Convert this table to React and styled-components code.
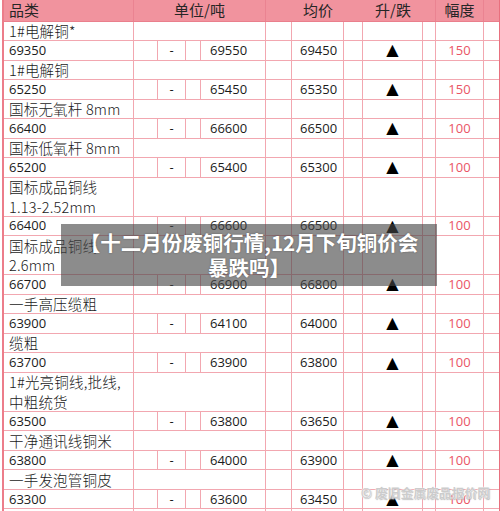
import React from "react";
import styled, { createGlobalStyle } from "styled-components";

const GlobalStyle = createGlobalStyle`
  html, body {
    margin: 0;
    padding: 0;
    background: #ffffff;
  }
  body {
    font-family: "Open Sans", "Noto Sans CJK SC", sans-serif;
  }
`;

const COLS = "130px 24px 28px 15px 65px 26px 52px 19px 60px 13px 48px 13px";
const LINE = "#f2a7b0";

const Page = styled.div`
  position: relative;
  width: 500px;
  height: 511px;
  overflow: hidden;
`;

const Sheet = styled.div`
  margin-left: 2px;
  width: 495px;
  border-left: 2px solid #ec7d8a;
  border-right: 2px solid #e8707e;
  box-sizing: content-box;
`;

const Row = styled.div`
  display: grid;
  grid-template-columns: ${COLS};
  height: ${(p) => p.$h}px;
  border-bottom: 1px solid ${LINE};
  box-sizing: border-box;
  background: ${(p) => (p.$head ? "#f1939e" : "#ffffff")};
  border-bottom-color: ${(p) => (p.$head ? "#ea7f8c" : LINE)};
`;

const Cell = styled.div`
  grid-column: ${(p) => p.$span || "auto"};
  display: flex;
  flex-direction: column;
  justify-content: center;
  align-items: ${(p) => (p.$center ? "center" : "flex-start")};
  padding-left: ${(p) => p.$pad || 0}px;
  border-right: ${(p) => (p.$noline ? "none" : `1px solid ${p.$head ? "#ea8391" : LINE}`)};
  box-sizing: border-box;
  overflow: hidden;
  white-space: nowrap;
`;

const HeadText = styled.span`
  font-family: "Noto Sans CJK SC", sans-serif;
  font-size: 15px;
  color: #262626;
  line-height: 20px;
  margin-top: -1px;
`;

const NameLine = styled.span`
  font-family: "Noto Sans CJK SC", sans-serif;
  font-weight: 300;
  font-size: 14.5px;
  color: #1a1a1a;
  line-height: 19.5px;
  letter-spacing: 0.2px;
`;

const Num = styled.span`
  font-family: "Open Sans", sans-serif;
  font-size: 13px;
  color: ${(p) => (p.$red ? "#ea5565" : "#1b1b1b")};
  line-height: 19px;
`;

const Arrow = styled.span`
  font-family: "DejaVu Sans", sans-serif;
  font-size: 16px;
  color: #000000;
  line-height: 19px;
  margin-top: -1px;
`;

const Banner = styled.div`
  position: absolute;
  left: 61px;
  top: 224px;
  width: 376px;
  height: 62px;
  background: rgba(70, 70, 70, 0.62);
  display: flex;
  flex-direction: column;
  align-items: center;
  justify-content: center;
`;

const BannerText = styled.div`
  font-family: "Noto Sans CJK SC", sans-serif;
  font-weight: 700;
  font-size: 20.5px;
  line-height: 25px;
  color: #ffffff;
  text-align: center;
  text-shadow: 0 0 2px rgba(0, 0, 0, 0.35);
`;

const Watermark = styled.div`
  position: absolute;
  right: 10px;
  bottom: 9px;
  font-family: "Noto Sans CJK SC", sans-serif;
  font-weight: 700;
  font-size: 12.5px;
  color: rgba(195, 195, 195, 0.85);
  text-shadow: 0 0 1px #ffffff, 0 0 2px #ffffff, 1px 1px 1px rgba(120, 120, 120, 0.6);
  letter-spacing: 0.3px;
`;

const ITEMS = [
  { name: ["1#电解铜*"], v: ["69350", "69550", "69450", "150"] },
  { name: ["1#电解铜"], v: ["65250", "65450", "65350", "150"] },
  { name: ["国标无氧杆 8mm"], v: ["66400", "66600", "66500", "100"] },
  { name: ["国标低氧杆 8mm"], v: ["65200", "65400", "65300", "100"] },
  { name: ["国标成品铜线", "1.13-2.52mm"], v: ["66400", "66600", "66500", "100"] },
  { name: ["国标成品铜线", "2.6mm"], v: ["66700", "66900", "66800", "100"] },
  { name: ["一手高压缆粗"], v: ["63900", "64100", "64000", "100"] },
  { name: ["缆粗"], v: ["63700", "63900", "63800", "100"] },
  { name: ["1#光亮铜线,批线,", "中粗统货"], v: ["63500", "63800", "63650", "100"] },
  { name: ["干净通讯线铜米"], v: ["63800", "64000", "63900", "100"] },
  { name: ["一手发泡管铜皮"], v: ["63300", "63600", "63450", "100"] },
];

const UNIT = 19.52;

const HeaderRow = () => (
  <Row $head $h={21.5}>
    <Cell $head $pad={5}><HeadText>品类</HeadText></Cell>
    <Cell $head $span="2 / 6" $center><HeadText>单位/吨</HeadText></Cell>
    <Cell $head $noline />
    <Cell $head $noline $center><HeadText>均价</HeadText></Cell>
    <Cell $head $noline />
    <Cell $head $noline $center><HeadText>升/跌</HeadText></Cell>
    <Cell $head />
    <Cell $head $center><HeadText>幅度</HeadText></Cell>
    <Cell $head $noline />
  </Row>
);

const NameRow = ({ lines }) => (
  <Row $h={UNIT * lines.length}>
    <Cell $pad={5}>
      {lines.map((l) => (
        <NameLine key={l}>{l}</NameLine>
      ))}
    </Cell>
    <Cell $span="2 / 6" />
    <Cell />
    <Cell />
    <Cell />
    <Cell />
    <Cell />
    <Cell />
    <Cell $noline />
  </Row>
);

const PriceRow = ({ v }) => (
  <Row $h={UNIT}>
    <Cell $pad={5}><Num>{v[0]}</Num></Cell>
    <Cell />
    <Cell $center><Num>-</Num></Cell>
    <Cell />
    <Cell $pad={9}><Num>{v[1]}</Num></Cell>
    <Cell />
    <Cell $pad={8}><Num>{v[2]}</Num></Cell>
    <Cell />
    <Cell $center><Arrow>▲</Arrow></Cell>
    <Cell />
    <Cell $center><Num $red>{v[3]}</Num></Cell>
    <Cell $noline />
  </Row>
);

export default function App() {
  return (
    <>
      <GlobalStyle />
      <Page>
        <Sheet>
          <HeaderRow />
          {ITEMS.map((it, i) => (
            <React.Fragment key={i}>
              <NameRow lines={it.name} />
              <PriceRow v={it.v} />
            </React.Fragment>
          ))}
          <NameRow lines={[""]} />
        </Sheet>
        <Banner>
          <BannerText>【十二月份废铜行情,12月下旬铜价会</BannerText>
          <BannerText>暴跌吗】</BannerText>
        </Banner>
        <Watermark>© 废旧金属废品报价网</Watermark>
      </Page>
    </>
  );
}
